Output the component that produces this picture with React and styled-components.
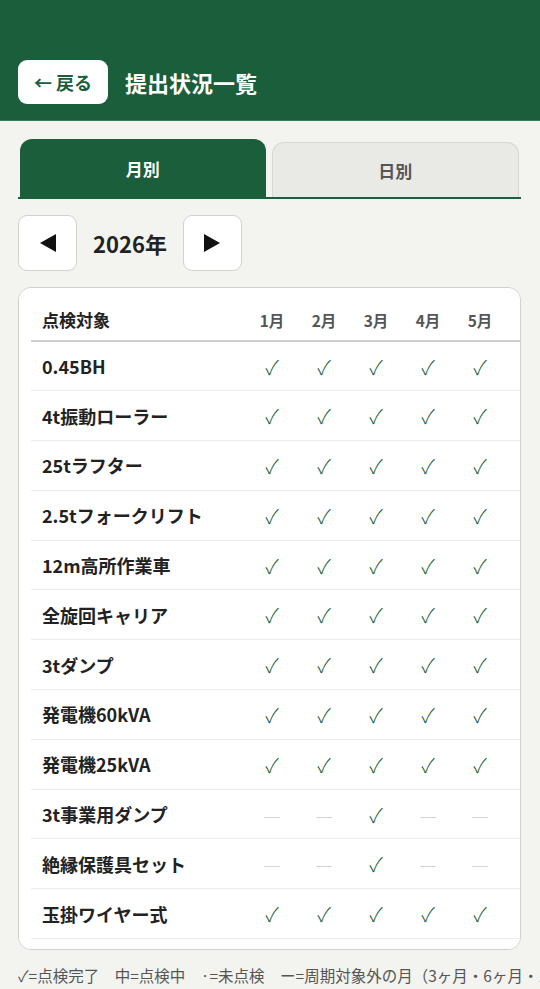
import React from "react";
import styled, { createGlobalStyle } from "styled-components";

const GREEN = "#1b5e3c";

const Global = createGlobalStyle`
  html, body { margin: 0; padding: 0; background: #f3f3ef; overflow-x: hidden; }
  body { font-family: "Noto Sans CJK JP", "Noto Sans", sans-serif; color: #222; }
  * { box-sizing: border-box; }
`;

const Header = styled.header`
  background: ${GREEN};
  padding: 60px 18px 16px;
  display: flex;
  align-items: center;
  gap: 17px;
  border-bottom: 1px solid #3d7a5a;
`;

const BackButton = styled.button`
  width: 90px;
  height: 44px;
  padding: 0;
  border: none;
  border-radius: 9px;
  background: #fff;
  color: ${GREEN};
  font-family: inherit;
  font-size: 18px;
  font-weight: 700;
  display: flex;
  align-items: center;
  justify-content: center;
  gap: 3px;
`;

const Title = styled.h1`
  margin: 0;
  color: #fff;
  font-size: 22px;
  font-weight: 700;
`;

const Main = styled.main`
  padding: 18px 19px 0 18px;
`;

const Tabs = styled.div`
  display: flex;
  align-items: flex-end;
  gap: 6px;
  padding: 0 2px;
  border-bottom: 2px solid ${GREEN};
`;

const Tab = styled.div`
  flex: 1;
  height: ${(p) => (p.$active ? "58px" : "55px")};
  display: flex;
  align-items: center;
  justify-content: center;
  border-radius: 12px 12px 0 0;
  font-size: 17px;
  font-weight: 700;
  background: ${(p) => (p.$active ? GREEN : "#e9e9e5")};
  color: ${(p) => (p.$active ? "#fff" : "#555")};
  border: ${(p) => (p.$active ? "none" : "1px solid #d6d6d2")};
  border-bottom: none;
`;

const YearNav = styled.div`
  display: flex;
  align-items: center;
  gap: 16px;
  margin-top: 16px;
`;

const NavButton = styled.button`
  width: 59px;
  height: 56px;
  background: #fff;
  border: 1px solid #d2d2ce;
  border-radius: 9px;
  color: #111;
  display: flex;
  align-items: center;
  justify-content: center;
  padding: 0;
`;

const Year = styled.span`
  font-size: 22px;
  font-weight: 700;
  color: #222;
`;

const Card = styled.div`
  margin-top: 16px;
  background: #fff;
  border: 1px solid #d0d0cc;
  border-radius: 13px;
  padding: 11px 0 10px 12px;
  overflow-x: auto;
  scrollbar-width: none;
  &::-webkit-scrollbar { display: none; }
`;

const Table = styled.table`
  border-collapse: collapse;
  width: 839px;
  table-layout: fixed;
`;

const Th = styled.th`
  height: 42px;
  font-size: ${(p) => (p.$first ? "17px" : "15.5px")};
  font-weight: 700;
  color: ${(p) => (p.$first ? "#222" : "#555")};
  text-align: ${(p) => (p.$first ? "left" : "center")};
  padding: 0 0 0 ${(p) => (p.$first ? "11px" : "0")};
  width: ${(p) => (p.$first ? "215px" : "52px")};
  border-bottom: 2px solid #cfcfcf;
`;

const Td = styled.td`
  height: 49.8px;
  border-bottom: 1px solid #ececea;
  padding: 0 0 0 ${(p) => (p.$first ? "11px" : "0")};
  text-align: ${(p) => (p.$first ? "left" : "center")};
  font-size: ${(p) => (p.$first ? "18px" : "20px")};
  font-weight: ${(p) => (p.$first ? 700 : 300)};
  color: ${(p) => (p.$first ? "#222" : p.$dash ? "#d4d4d4" : GREEN)};
  white-space: nowrap;
`;

const LegendWrap = styled.div`
  margin: 14px -19px 0 0;
  overflow: hidden;
`;

const Legend = styled.p`
  margin: 0;
  font-size: 15.5px;
  color: #555;
  white-space: nowrap;
`;

const items = [
  ["0.45BH", "all"],
  ["4t振動ローラー", "all"],
  ["25tラフター", "all"],
  ["2.5tフォークリフト", "all"],
  ["12m高所作業車", "all"],
  ["全旋回キャリア", "all"],
  ["3tダンプ", "all"],
  ["発電機60kVA", "all"],
  ["発電機25kVA", "all"],
  ["3t事業用ダンプ", "q"],
  ["絶縁保護具セット", "q"],
  ["玉掛ワイヤー式", "all"],
];

const months = Array.from({ length: 12 }, (_, i) => `${i + 1}月`);

function cell(kind, i) {
  if (i > 4) return "";
  if (kind === "all") return "✓";
  return i === 2 ? "✓" : "—";
}

const Triangle = ({ dir }) => (
  <svg width="16" height="18" viewBox="0 0 16 18">
    {dir === "left" ? (
      <polygon points="16,0 16,18 0,9" fill="#111" />
    ) : (
      <polygon points="0,0 0,18 16,9" fill="#111" />
    )}
  </svg>
);

export default function App() {
  return (
    <>
      <Global />
      <Header>
        <BackButton>← 戻る</BackButton>
        <Title>提出状況一覧</Title>
      </Header>
      <Main>
        <Tabs>
          <Tab $active>月別</Tab>
          <Tab>日別</Tab>
        </Tabs>
        <YearNav>
          <NavButton aria-label="前年">
            <Triangle dir="left" />
          </NavButton>
          <Year>2026年</Year>
          <NavButton aria-label="翌年">
            <Triangle dir="right" />
          </NavButton>
        </YearNav>
        <Card>
          <Table>
            <thead>
              <tr>
                <Th $first>点検対象</Th>
                {months.map((m) => (
                  <Th key={m}>{m}</Th>
                ))}
              </tr>
            </thead>
            <tbody>
              {items.map(([name, kind]) => (
                <tr key={name}>
                  <Td $first>{name}</Td>
                  {months.map((m, i) => {
                    const v = cell(kind, i);
                    return (
                      <Td key={m} $dash={v === "—"}>
                        {v}
                      </Td>
                    );
                  })}
                </tr>
              ))}
            </tbody>
          </Table>
        </Card>
        <LegendWrap>
          <Legend>✓=点検完了　中=点検中　·=未点検　ー=周期対象外の月（3ヶ月・6ヶ月・12ヶ月周期の対象）</Legend>
        </LegendWrap>
      </Main>
    </>
  );
}
